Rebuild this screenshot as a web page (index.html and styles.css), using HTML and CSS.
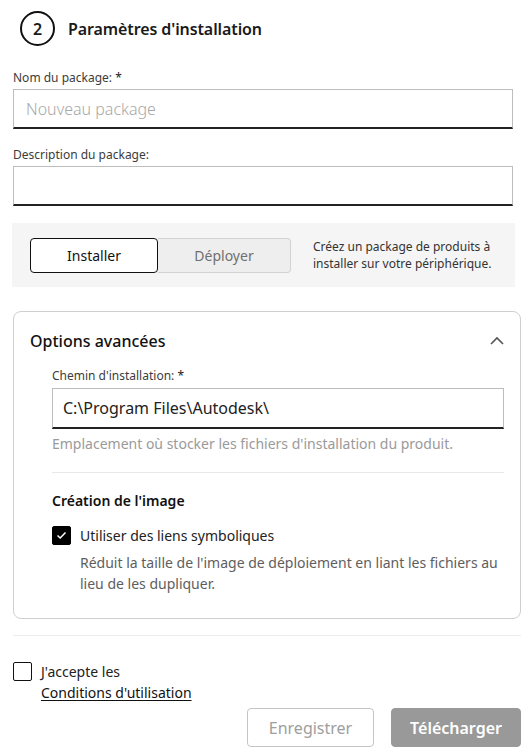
FILE: index.html
```html
<!DOCTYPE html>
<html lang="fr">
<head>
<meta charset="utf-8">
<link rel="stylesheet" href="styles.css">
</head>
<body>
<div class="page">
  <div class="step">
    <span class="step-num">2</span>
    <h2 class="step-title">Paramètres d'installation</h2>
  </div>

  <div class="field">
    <label class="label">Nom du package: <span class="req">*</span></label>
    <div class="input placeholder">Nouveau package</div>
  </div>

  <div class="field field-desc">
    <label class="label">Description du package:</label>
    <div class="input"></div>
  </div>

  <div class="mode-band">
    <div class="segmented">
      <div class="seg seg-active">Installer</div>
      <div class="seg seg-inactive">Déployer</div>
    </div>
    <p class="mode-help">Créez un package de produits à installer sur votre périphérique.</p>
  </div>

  <div class="card">
    <div class="card-head">
      <span class="card-title">Options avancées</span>
      <svg class="chevron" width="14" height="9" viewBox="0 0 14 9"><path d="M1 8 L7 2 L13 8" fill="none" stroke="#555" stroke-width="1.6"/></svg>
    </div>
    <div class="card-body">
      <label class="label">Chemin d'installation: <span class="req">*</span></label>
      <div class="input input-value">C:\Program Files\Autodesk\</div>
      <p class="helper">Emplacement où stocker les fichiers d'installation du produit.</p>
      <div class="inner-divider"></div>
      <h3 class="sub-title">Création de l'image</h3>
      <div class="check-row">
        <span class="checkbox checked">
          <svg width="11" height="9" viewBox="0 0 11 9"><path d="M1.5 4.5 L4.2 7 L9.5 1.5" fill="none" stroke="#fff" stroke-width="1.5"/></svg>
        </span>
        <span class="check-label">Utiliser des liens symboliques</span>
      </div>
      <p class="check-help">Réduit la taille de l'image de déploiement en liant les fichiers au lieu de les dupliquer.</p>
    </div>
  </div>

  <div class="divider"></div>

  <div class="accept">
    <span class="checkbox"></span>
    <div class="accept-text">
      <div>J'accepte les</div>
      <a class="link" href="#">Conditions d'utilisation</a>
    </div>
  </div>

  <div class="actions">
    <button class="btn btn-secondary">Enregistrer</button>
    <button class="btn btn-primary">Télécharger</button>
  </div>
</div>
</body>
</html>
```

FILE: styles.css
```css
* { box-sizing: border-box; }
html, body { margin: 0; padding: 0; background: #fff; }
body {
  font-family: "Noto Sans", "Open Sans", sans-serif;
  color: #1a1a1a;
}
.page {
  width: 530px;
  padding: 11px 9px 0 13px;
}
.step {
  display: flex;
  align-items: center;
  gap: 13px;
  margin-left: 7px;
  height: 35px;
}
.step-num {
  width: 35px;
  height: 35px;
  border: 2px solid #111;
  border-radius: 50%;
  display: flex;
  align-items: center;
  justify-content: center;
  font-size: 16px;
  font-weight: 600;
}
.step-title {
  margin: 0;
  font-size: 16px;
  font-weight: 600;
  letter-spacing: -0.1px;
}
.field { margin-top: 24px; width: 500px; }
.field-desc { margin-top: 18px; }
.label {
  display: block;
  font-size: 12px;
  color: #3c3c3c;
  line-height: 16px;
  margin-bottom: 3px;
}
.req { color: #222; }
.input {
  height: 40px;
  border: 1px solid #bdbdbd;
  border-bottom: 2px solid #222;
  padding: 0 12px;
  display: flex;
  align-items: center;
  font-size: 16px;
  background: #fff;
}
.placeholder { color: #a8a8a8; font-weight: 300; }
.input-value { color: #222; padding-left: 10px; }

.mode-band {
  margin: 17px 0 0 -1px;
  width: 503px;
  height: 64px;
  background: #f5f5f5;
  display: flex;
  align-items: center;
  padding-left: 18px;
  gap: 22px;
}
.segmented {
  display: flex;
  height: 35px;
}
.seg {
  display: flex;
  align-items: center;
  justify-content: center;
  font-size: 14px;
}
.seg-active {
  width: 128px;
  background: #fff;
  border: 1px solid #111;
  border-radius: 4px;
  color: #111;
}
.seg-inactive {
  width: 133px;
  background: #eeeeee;
  border: 1px solid #d2d2d2;
  border-left: none;
  border-radius: 0 4px 4px 0;
  color: #707070;
}
.mode-help {
  margin: 0;
  font-size: 12px;
  line-height: 17px;
  color: #333;
  width: 185px;
}

.card {
  margin-top: 24px;
  width: 508px;
  border: 1px solid #cfcfcf;
  border-radius: 8px;
  padding: 0 16px 24px 16px;
}
.card-head {
  display: flex;
  justify-content: space-between;
  align-items: center;
  height: 56px;
  padding-top: 1px;
}
.card-title {
  font-size: 16px;
  font-weight: 500;
  color: #111;
}
.chevron { margin-right: 0; }
.card-body { padding-left: 22px; padding-right: 0; }
.card-body .input { width: 452px; height: 41px; }
.card-body .label { margin-bottom: 4px; }
.helper {
  margin: 5px 0 0;
  font-size: 14px;
  color: #9a9a9a;
  line-height: 19px;
}
.inner-divider {
  width: 452px;
  height: 1px;
  background: #e8e8e8;
  margin-top: 19px;
}
.sub-title {
  margin: 18px 0 0;
  font-size: 14px;
  font-weight: 600;
  color: #111;
  line-height: 20px;
}
.check-row {
  display: flex;
  align-items: center;
  gap: 9px;
  margin-top: 15px;
}
.checkbox {
  width: 19px;
  height: 19px;
  border: 1.5px solid #111;
  border-radius: 2px;
  display: inline-flex;
  align-items: center;
  justify-content: center;
  flex: none;
  background: #fff;
}
.checkbox.checked { background: #000; border-color: #000; }
.check-label { font-size: 14px; color: #222; }
.check-help {
  margin: 7px 0 0 28px;
  font-size: 14px;
  line-height: 21px;
  color: #5e5e5e;
}

.divider {
  width: 508px;
  height: 1px;
  background: #ececec;
  margin-top: 16px;
}
.accept {
  display: flex;
  gap: 9px;
  margin-top: 26px;
  align-items: flex-start;
}
.accept-text {
  font-size: 14px;
  line-height: 21px;
  color: #222;
  margin-top: -1px;
}
.link {
  color: #111;
  text-decoration: underline;
  text-underline-offset: 2px;
}
.actions {
  display: flex;
  justify-content: flex-end;
  gap: 17px;
  width: 508px;
  margin-top: 5px;
}
.btn {
  height: 39px;
  border-radius: 4px;
  font-family: inherit;
  font-size: 16px;
  padding: 0;
}
.btn-secondary {
  width: 127px;
  background: #fff;
  border: 1px solid #c4c4c4;
  color: #9e9e9e;
}
.btn-primary {
  width: 130px;
  background: #999999;
  border: 1px solid #999999;
  color: #fff;
  font-weight: 600;
}
```
